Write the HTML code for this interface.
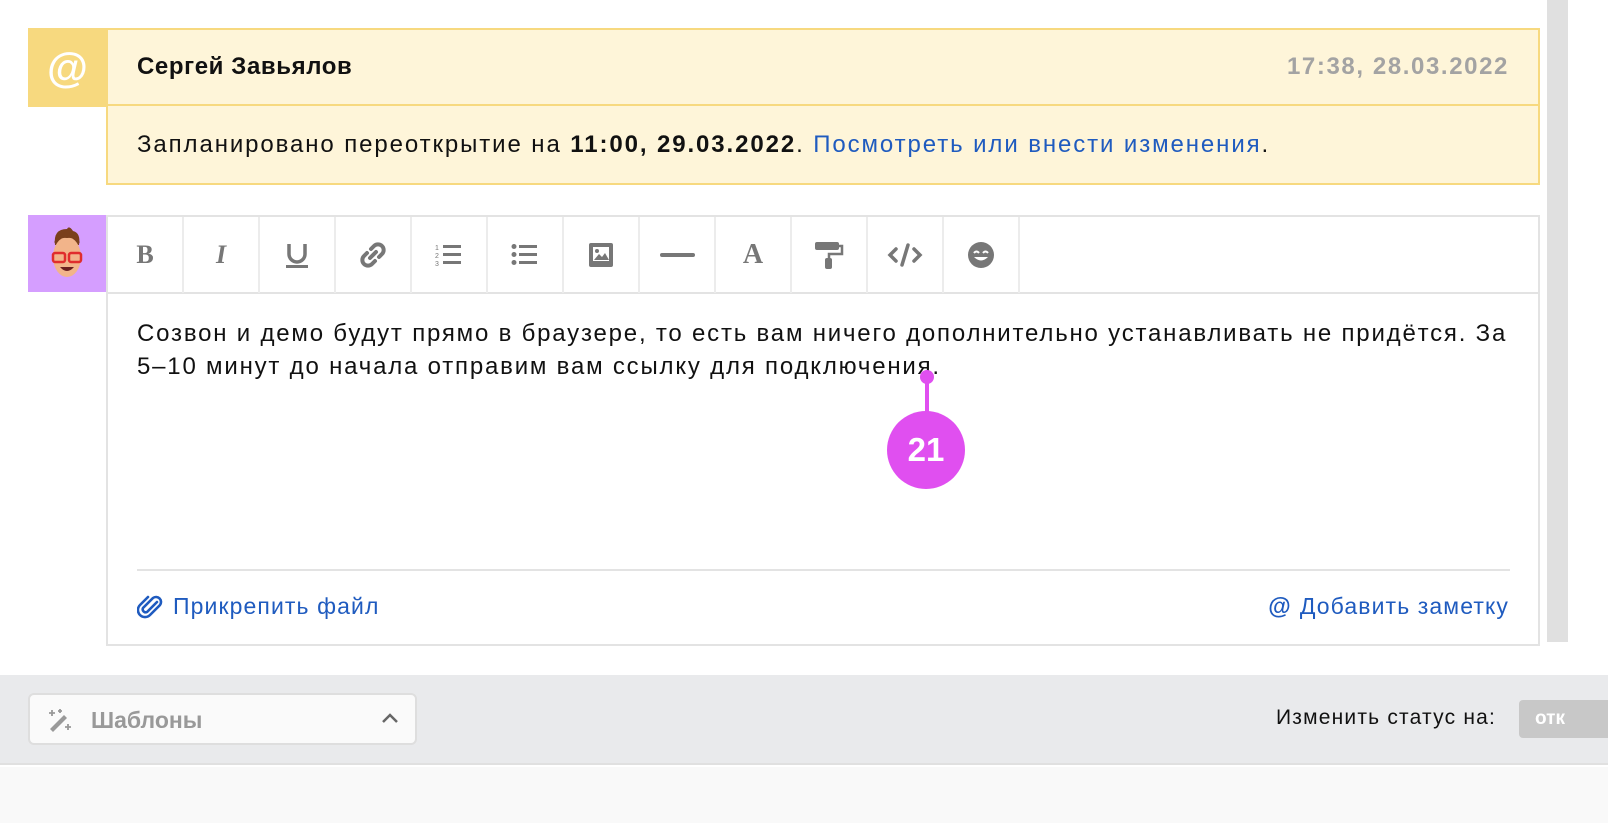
<!DOCTYPE html>
<html><head><meta charset="utf-8"><style>
*{box-sizing:border-box;margin:0;padding:0}
body{width:1608px;height:823px;background:#fff;font-family:"Liberation Sans",Arial,sans-serif;position:relative;overflow:hidden;color:#111}
.abs{position:absolute}
.tb{position:absolute;top:0;width:76px;height:76px;border-right:2px solid #ececec;display:flex;align-items:center;justify-content:center}
a{color:#1f5bbf;text-decoration:none}
</style></head><body>
<div class="abs" style="left:1547px;top:0;width:21px;height:642px;background:#e0e0e0"></div>

<div class="abs" style="left:28px;top:28px;width:79px;height:79px;background:#f7d97f;display:flex;align-items:center;justify-content:center;color:#fff;font-weight:bold;font-size:42px">@</div>
<div class="abs" style="left:106px;top:28px;width:1434px;height:157px;background:#fef5d9;border:2px solid #f7d97f">
  <div style="height:76px;border-bottom:2px solid #f7d97f;position:relative">
    <div class="abs" style="left:29px;top:23px;font-size:24px;font-weight:bold;letter-spacing:0.6px">Сергей Завьялов</div>
    <div class="abs" style="right:29px;top:23px;font-size:24px;font-weight:bold;color:#a3a3a3;letter-spacing:1.6px">17:38, 28.03.2022</div>
  </div>
  <div class="abs" style="left:29px;top:101px;font-size:24px;letter-spacing:1.9px;white-space:nowrap">Запланировано переоткрытие на <b>11:00, 29.03.2022</b>. <a>Посмотреть или внести изменения</a>.</div>
</div>

<div class="abs" style="left:28px;top:215px;width:78px;height:77px;background:#d59eff;display:flex;align-items:center;justify-content:center">
<svg width="40" height="58" viewBox="0 0 40 58"><path d="M8 20 Q6 4 20 4 Q22 0 26 6 Q34 8 32 20 Z" fill="#7a3f1c"/><ellipse cx="20" cy="32" rx="14" ry="20" fill="#f2b48a"/><rect x="6" y="28" width="12" height="9" rx="2" fill="none" stroke="#e02d2d" stroke-width="2.5"/><rect x="22" y="28" width="12" height="9" rx="2" fill="none" stroke="#e02d2d" stroke-width="2.5"/><path d="M13 42 Q20 50 27 42 Z" fill="#6b1f1f"/><path d="M7 18 Q10 8 20 8 Q30 8 33 18 Q28 12 20 13 Q12 12 7 18Z" fill="#7a3f1c"/></svg>
</div>

<div class="abs" style="left:106px;top:215px;width:1434px;height:431px;border:2px solid #e3e3e3">
  <div style="position:relative;height:77px;border-bottom:2px solid #e3e3e3">
    <div class="tb" style="left:0"><span style="font:bold 26px 'Liberation Serif',serif;color:#777">B</span></div>
    <div class="tb" style="left:76px"><span style="font:italic bold 26px 'Liberation Serif',serif;color:#777">I</span></div>
    <div class="tb" style="left:152px"><svg width="24" height="28"><path d="M4 3v10a8 8 0 0 0 16 0V3" fill="none" stroke="#777" stroke-width="3.5"/><rect x="1" y="24" width="22" height="3" fill="#777"/></svg></div>
    <div class="tb" style="left:228px"><svg width="28" height="28" viewBox="0 0 28 28"><g fill="none" stroke="#777" stroke-width="4" stroke-linecap="round"><path d="M12 8 l3-3 a5 5 0 0 1 8 8 l-3 3"/><path d="M16 20 l-3 3 a5 5 0 0 1-8-8 l3-3"/><path d="M11 17 l6-6"/></g></svg></div>
    <div class="tb" style="left:304px"><svg width="28" height="26"><text x="0" y="8" font-size="7" fill="#777" font-family="Liberation Sans">1</text><text x="0" y="16" font-size="7" fill="#777" font-family="Liberation Sans">2</text><text x="0" y="24" font-size="7" fill="#777" font-family="Liberation Sans">3</text><rect x="8" y="3" width="18" height="3" fill="#777"/><rect x="8" y="11" width="18" height="3" fill="#777"/><rect x="8" y="19" width="18" height="3" fill="#777"/></svg></div>
    <div class="tb" style="left:380px"><svg width="28" height="26"><circle cx="3" cy="4.5" r="2.5" fill="#777"/><circle cx="3" cy="12.5" r="2.5" fill="#777"/><circle cx="3" cy="20.5" r="2.5" fill="#777"/><rect x="8" y="3" width="18" height="3" fill="#777"/><rect x="8" y="11" width="18" height="3" fill="#777"/><rect x="8" y="19" width="18" height="3" fill="#777"/></svg></div>
    <div class="tb" style="left:456px"><svg width="26" height="26"><rect x="1" y="1" width="24" height="24" rx="2" fill="#777"/><rect x="5" y="5" width="16" height="14" fill="#fff"/><path d="M6 18l5-6 3 3 3-4 4 7z" fill="#777"/><circle cx="9" cy="9" r="2" fill="#777"/></svg></div>
    <div class="tb" style="left:532px"><div style="width:35px;height:4px;background:#777;border-radius:2px"></div></div>
    <div class="tb" style="left:608px"><span style="font:bold 28px 'Liberation Serif',serif;color:#777">A</span></div>
    <div class="tb" style="left:684px"><svg width="30" height="30"><rect x="1" y="2" width="24" height="8" rx="2" fill="#777"/><path d="M25 6h3v8h-13v5" fill="none" stroke="#777" stroke-width="2.5"/><rect x="11" y="18" width="7" height="11" rx="2" fill="#777"/></svg></div>
    <div class="tb" style="left:760px"><svg width="36" height="28"><g fill="none" stroke="#777" stroke-width="3.5" stroke-linecap="round"><path d="M9 8l-6 6 6 6M27 8l6 6-6 6M21 4l-6 20"/></g></svg></div>
    <div class="tb" style="left:836px"><svg width="28" height="28"><circle cx="14" cy="14" r="13" fill="#777"/><path d="M7 12q2.5-3 5 0M16 12q2.5-3 5 0" fill="none" stroke="#fff" stroke-width="2"/><path d="M7 16q7 7 14 0z" fill="#fff"/></svg></div>
  </div>
  <div class="abs" style="left:29px;top:100px;font-size:24px;line-height:33px;letter-spacing:1.8px;white-space:nowrap">Созвон и демо будут прямо в браузере, то есть вам ничего дополнительно устанавливать не придётся. За<br>5–10 минут до начала отправим вам ссылку для подключения.</div>
  <div class="abs" style="left:29px;top:352px;width:1373px;height:2px;background:#e3e3e3"></div>
  <div class="abs" style="left:29px;top:376px;font-size:23px;letter-spacing:1.1px;color:#1f5bbf;display:flex;align-items:center"><svg width="26" height="26" viewBox="0 0 26 26" style="margin-right:10px"><path d="M20 8 L10 18 a3 3 0 0 1-4-4 L16 4 a5 5 0 0 1 7 7 L13 21 a7 7 0 0 1-10-10 L11 3" fill="none" stroke="#1f5bbf" stroke-width="2.6" stroke-linecap="round"/></svg>Прикрепить файл</div>
  <div class="abs" style="right:29px;top:376px;font-size:23px;letter-spacing:1.1px;color:#1f5bbf"><b style="margin-right:8px">@</b>Добавить заметку</div>
</div>

<div class="abs" style="left:925px;top:377px;width:4px;height:40px;background:#e04ff0"></div>
<div class="abs" style="left:920px;top:370px;width:14px;height:14px;border-radius:50%;background:#e04ff0"></div>
<div class="abs" style="left:887px;top:411px;width:78px;height:78px;border-radius:50%;background:#e04ff0;color:#fff;font-weight:bold;font-size:33px;display:flex;align-items:center;justify-content:center">21</div>

<div class="abs" style="left:0;top:675px;width:1608px;height:90px;background:#e9eaec;border-bottom:2px solid #e0e0e0"></div>
<div class="abs" style="left:0;top:767px;width:1608px;height:56px;background:#f9f9f9"></div>
<div class="abs" style="left:28px;top:693px;width:389px;height:52px;background:#fafafa;border:2px solid #dedede;border-radius:6px">
  <svg class="abs" style="left:16px;top:12px" width="26" height="26"><path d="M4 22L18 8l3 3L7 25z" fill="#999"/><path d="M6 3v6M3 6h6M22 17v6M19 20h6M14 2v4M12 4h4" stroke="#999" stroke-width="1.8"/></svg>
  <div class="abs" style="left:61px;top:12px;font-size:23px;font-weight:bold;color:#999">Шаблоны</div>
  <svg class="abs" style="right:16px;top:16px" width="18" height="14"><path d="M2 11l7-7 7 7" fill="none" stroke="#666" stroke-width="2.5"/></svg>
</div>
<div class="abs" style="left:1276px;top:706px;font-size:21px;letter-spacing:1.2px;color:#111">Изменить статус на:</div>
<div class="abs" style="left:1519px;top:700px;width:100px;height:38px;background:#c8c8c8;border-radius:4px;color:#fff;font-weight:bold;font-size:19px;padding:8px 0 0 16px">отк</div>
</body></html>
